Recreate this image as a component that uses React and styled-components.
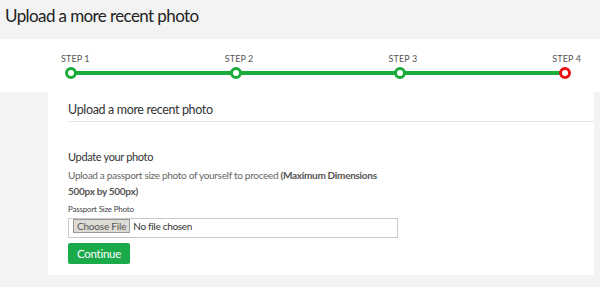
import styled, { createGlobalStyle } from "styled-components";

const GlobalStyle = createGlobalStyle`
  html, body {
    margin: 0;
    padding: 0;
    background: #f3f3f3;
    font-family: Lato, "Open Sans", sans-serif;
  }
`;

const Page = styled.div`
  width: 600px;
  height: 287px;
  overflow: hidden;
  background: #f3f3f3;
`;

const PageTitle = styled.h1`
  margin: 0;
  padding: 5px 0 0 5px;
  height: 39px;
  box-sizing: border-box;
  font-size: 17px;
  line-height: 22px;
  letter-spacing: -0.6px;
  font-weight: 400;
  color: #222;
`;

// white band with the progress steps
const StepsBand = styled.div`
  background: #fff;
  height: 53px;
  padding-top: 14px;
  box-sizing: border-box;
`;

const StepLabels = styled.div`
  display: flex;
  justify-content: space-between;
  margin: 0 19px 0 61px;
`;

const StepLabel = styled.span`
  font-size: 9px;
  color: #555;
  letter-spacing: 0.1px;
  line-height: 11px;
`;

const Track = styled.div`
  display: flex;
  justify-content: space-between;
  margin: 3px 29px 0 65px;
  background-image: linear-gradient(#1aab3d, #1aab3d);
  background-size: calc(100% - 12px) 4px;
  background-position: center;
  background-repeat: no-repeat;
`;

const Dot = styled.span`
  width: 12px;
  height: 12px;
  box-sizing: border-box;
  border-radius: 50%;
  background: #fff;
  border: 3px solid ${(p) => (p.$current ? "#ee1111" : "#1aab3d")};
`;

const Card = styled.div`
  background: #fff;
  margin: 0 6px 0 48px;
  height: 183px;
  padding-top: 10px;
  box-sizing: border-box;
`;

const CardHeader = styled.h2`
  margin: 0 0 0 20px;
  padding-bottom: 4px;
  border-bottom: 1px solid #e5e5e5;
  font-size: 12.5px;
  line-height: 15px;
  letter-spacing: -0.35px;
  font-weight: 400;
  color: #333;
`;

const CardBody = styled.div`
  padding: 28px 20px 0 20px;
`;

const SectionTitle = styled.h3`
  margin: 0 0 3px;
  font-size: 11px;
  line-height: 14px;
  letter-spacing: -0.35px;
  font-weight: 400;
  color: #333;
`;

const Description = styled.p`
  margin: 0;
  font-size: 10px;
  line-height: 16px;
  letter-spacing: -0.3px;
  color: #666;
  width: 330px;

  b {
    color: #555;
  }
`;

const FieldLabel = styled.label`
  display: block;
  margin-top: 5px;
  font-size: 8px;
  line-height: 10px;
  letter-spacing: -0.2px;
  color: #444;
`;

const FileInput = styled.input`
  display: block;
  margin-top: 4px;
  width: 330px;
  height: 20px;
  box-sizing: border-box;
  border: 1px solid #c8c8c8;
  padding: 0 0 0 4px;
  font-family: Lato, sans-serif;
  font-size: 10px;
  letter-spacing: -0.3px;
  color: #333;
  background: #fff;

  &::file-selector-button {
    height: 14px;
    margin: 0 3px 0 0;
    padding: 0 3px;
    border: 1px solid #9a9a9a;
    border-radius: 0;
    background: #dedbd6;
    font-family: Lato, sans-serif;
    font-size: 10px;
    letter-spacing: -0.2px;
    color: #555;
  }
`;

const ContinueButton = styled.button`
  display: block;
  margin-top: 5px;
  width: 62px;
  height: 21px;
  border: none;
  border-radius: 2px;
  background: #1aaa4a;
  color: #fff;
  font-family: Lato, sans-serif;
  font-size: 11.5px;
  letter-spacing: -0.3px;
  padding: 0;
`;

const steps = ["STEP 1", "STEP 2", "STEP 3", "STEP 4"];

export default function App() {
  return (
    <Page>
      <GlobalStyle />
      <PageTitle>Upload a more recent photo</PageTitle>
      <StepsBand>
        <StepLabels>
          {steps.map((s) => (
            <StepLabel key={s}>{s}</StepLabel>
          ))}
        </StepLabels>
        <Track>
          {steps.map((s, i) => (
            <Dot key={s} $current={i === steps.length - 1} />
          ))}
        </Track>
      </StepsBand>
      <Card>
        <CardHeader>Upload a more recent photo</CardHeader>
        <CardBody>
          <SectionTitle>Update your photo</SectionTitle>
          <Description>
            Upload a passport size photo of yourself to proceed{" "}
            <b>(Maximum Dimensions 500px by 500px)</b>
          </Description>
          <FieldLabel htmlFor="photo">Passport Size Photo</FieldLabel>
          <FileInput id="photo" type="file" />
          <ContinueButton>Continue</ContinueButton>
        </CardBody>
      </Card>
    </Page>
  );
}
